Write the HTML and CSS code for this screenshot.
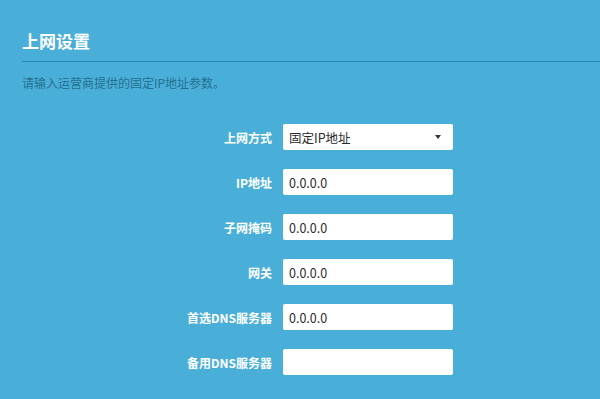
FILE: index.html
```html
<!DOCTYPE html>
<html lang="zh">
<head>
    <meta charset="UTF-8">
    <meta name="viewport" content="width=device-width, initial-scale=1.0">
    <title>上网设置</title>
    <link rel="stylesheet" href="styles.css">
</head>
<body>
<div class="page">
    <h1 class="title">上网设置</h1>
    <p class="hint">请输入运营商提供的固定IP地址参数。</p>

    <div class="form">
        <label class="label">上网方式</label>
        <div class="select">
            <span>固定IP地址</span>
            <i class="arrow"></i>
        </div>

        <label class="label">IP地址</label>
        <input class="field" type="text" value="0.0.0.0" autofocus>

        <label class="label">子网掩码</label>
        <input class="field" type="text" value="0.0.0.0">

        <label class="label">网关</label>
        <input class="field" type="text" value="0.0.0.0">

        <label class="label">首选DNS服务器</label>
        <input class="field" type="text" value="0.0.0.0">

        <label class="label">备用DNS服务器</label>
        <input class="field" type="text" value="">
    </div>
</div>
</body>
</html>
```

FILE: styles.css
```css
body {
    margin: 0;
    background-color: #4aafd8;
    font-family: "Noto Sans CJK SC", "Noto Sans", sans-serif;
    color: #fff;
}
.page {
    padding-top: 28px;
}
.title {
    margin: 0 0 0 22px;
    padding-bottom: 7px;
    font-size: 17px;
    line-height: 26px;
    font-weight: bold;
    border-bottom: 1px solid #2a89b4;
}
.hint {
    margin: 12px 0 0 22px;
    font-size: 12px;
    line-height: 18px;
    color: #246f92;
}
.form {
    display: grid;
    grid-template-columns: 272px 170px;
    column-gap: 11px;
    row-gap: 19px;
    margin-top: 32px;
    align-items: center;
}
.label {
    text-align: right;
    font-size: 12px;
    font-weight: bold;
    color: #fff;
}
.select,
.field {
    box-sizing: border-box;
    height: 26px;
    border: none;
    border-radius: 2px;
    background: #fff;
    font-family: "Noto Sans CJK SC", "Noto Sans", sans-serif;
    font-size: 12.5px;
    font-weight: normal;
    color: #2a2a2a;
    padding: 0 6px;
    outline: none;
}
.select {
    display: flex;
    align-items: center;
    justify-content: space-between;
    padding-right: 12px;
}
.arrow {
    width: 0;
    height: 0;
    border-left: 3.5px solid transparent;
    border-right: 3.5px solid transparent;
    border-top: 4px solid #333;
}
.field {
    caret-color: #222;
}
```
